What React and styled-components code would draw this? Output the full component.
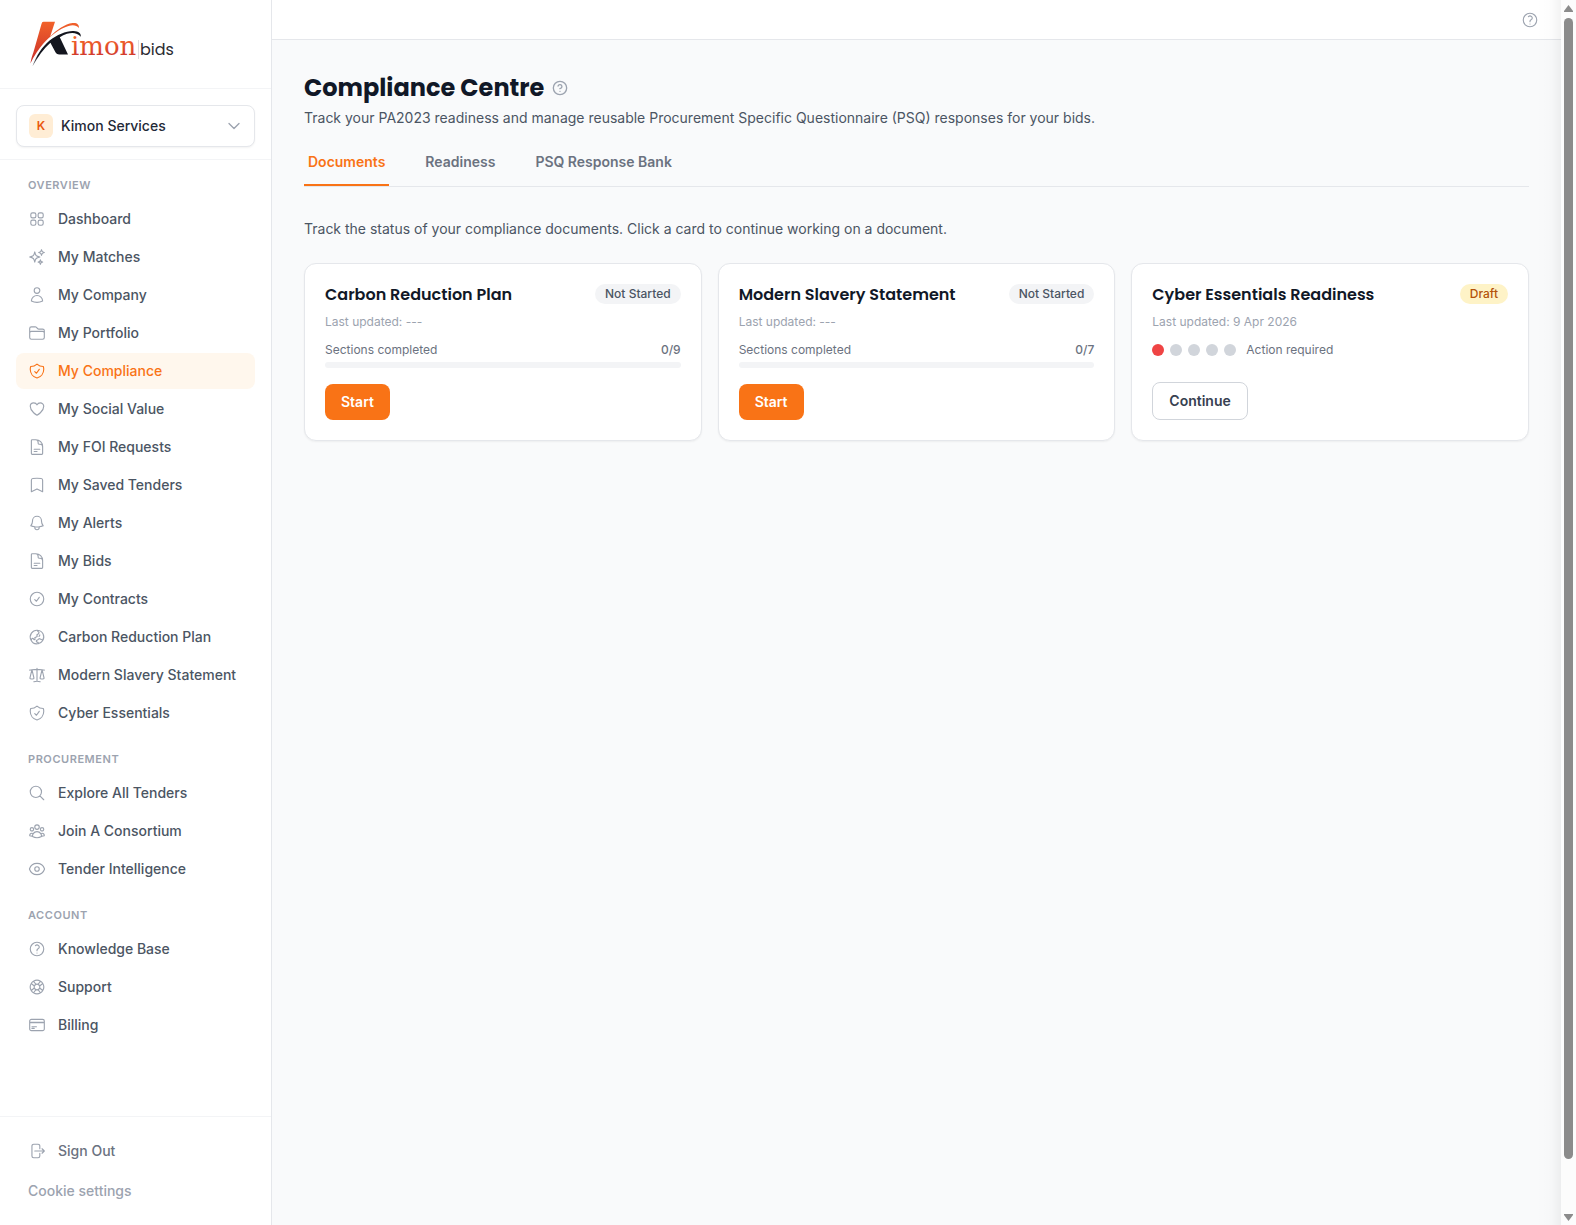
import React, { useState } from 'react';
import styled, { createGlobalStyle, css } from 'styled-components';
import { HelpCircle } from 'lucide-react';
import {
  HiOutlineSquares2X2,
  HiOutlineSparkles,
  HiOutlineUser,
  HiOutlineFolder,
  HiOutlineShieldCheck,
  HiOutlineHeart,
  HiOutlineDocumentText,
  HiOutlineBookmark,
  HiOutlineBell,
  HiOutlineCheckCircle,
  HiOutlineGlobeAsiaAustralia,
  HiOutlineScale,
  HiOutlineMagnifyingGlass,
  HiOutlineUserGroup,
  HiOutlineEye,
  HiOutlineQuestionMarkCircle,
  HiOutlineLifebuoy,
  HiOutlineCreditCard,
  HiOutlineArrowRightOnRectangle,
  HiOutlineChevronDown,
} from 'react-icons/hi2';

const GlobalStyle = createGlobalStyle`
  *, *::before, *::after {
    box-sizing: border-box;
  }

  body {
    margin: 0;
    background: #f9fafb;
    color: #4b5563;
    font-family: Inter, "Liberation Sans", sans-serif;
    font-size: 14px;
    line-height: 20px;
  }

  h1, h2, h3, p, ul {
    margin: 0;
    padding: 0;
  }

  ul {
    list-style: none;
  }

  button {
    font: inherit;
    cursor: pointer;
  }
`;

const Layout = styled.div`
  display: flex;
  min-height: 100vh;
`;

const Sidebar = styled.aside`
  display: flex;
  flex-direction: column;
  flex: 0 0 272px;
  background: #fff;
  border-right: 1px solid #e5e7eb;
`;

const Brand = styled.a`
  display: flex;
  align-items: center;
  padding: 16px 28px;
  border-bottom: 1px solid #f3f4f6;
`;

const LogoSvg = styled.svg`
  display: block;
  width: 148px;
  height: 56px;
`;

const Workspace = styled.div`
  padding: 16px 16px 12px;
  border-bottom: 1px solid #f3f4f6;
`;

const WorkspaceButton = styled.button`
  display: flex;
  align-items: center;
  gap: 8px;
  width: 100%;
  padding: 8px 12px;
  background: #fff;
  border: 1px solid #e5e7eb;
  border-radius: 8px;
  box-shadow: 0 1px 2px rgba(0, 0, 0, 0.05);
  color: #1f2937;
  font-weight: 500;
  text-align: left;

  svg {
    width: 16px;
    height: 16px;
    color: #9ca3af;
    stroke-width: 2;
  }
`;

const WorkspaceInitial = styled.span`
  width: 24px;
  height: 24px;
  border-radius: 6px;
  background: #ffedd5;
  color: #ea580c;
  font-size: 12px;
  font-weight: 600;
  line-height: 24px;
  text-align: center;
`;

const WorkspaceName = styled.span`
  flex: 1;
`;

const Nav = styled.nav`
  display: flex;
  flex-direction: column;
  flex: 1;
  gap: 20px;
  padding: 17px 16px 16px;
`;

const NavHeading = styled.h2`
  margin-bottom: 8px;
  padding: 0 12px;
  color: #9ca3af;
  font-size: 11px;
  font-weight: 600;
  line-height: 16px;
  letter-spacing: 0.05em;
  text-transform: uppercase;
`;

const NavList = styled.ul`
  display: flex;
  flex-direction: column;
  gap: 2px;
`;

const itemStyle = css`
  display: flex;
  align-items: center;
  gap: 12px;
  width: 100%;
  padding: 8px 12px;
  border: 0;
  border-radius: 8px;
  background: transparent;
  font-weight: 500;
  text-decoration: none;

  svg {
    flex: none;
    width: 18px;
    height: 18px;
  }
`;

const NavLink = styled.a`
  ${itemStyle}
  background: ${(props) => (props.$active ? '#fff7ed' : 'transparent')};
  color: ${(props) => (props.$active ? '#f97316' : '#4b5563')};

  svg {
    color: ${(props) => (props.$active ? '#f97316' : '#9ca3af')};
  }
`;

const SidebarFooter = styled.div`
  display: flex;
  flex-direction: column;
  gap: 4px;
  padding: 16px;
  border-top: 1px solid #f3f4f6;
`;

const FooterButton = styled.button`
  ${itemStyle}
  color: ${(props) => (props.$muted ? '#9ca3af' : '#6b7280')};

  svg {
    color: #9ca3af;
  }
`;

const Page = styled.div`
  position: relative;
  display: flex;
  flex-direction: column;
  flex: 1;
  min-width: 0;
`;

// soft shade along the scrolling edge
const EdgeShade = styled.div`
  position: absolute;
  top: 0;
  right: 0;
  bottom: 0;
  width: 24px;
  background: linear-gradient(to right, rgba(0, 0, 0, 0), rgba(0, 0, 0, 0.01) 60%, rgba(0, 0, 0, 0.05));
  pointer-events: none;
`;

const TopBar = styled.header`
  display: flex;
  align-items: center;
  justify-content: flex-end;
  height: 40px;
  padding: 0 22px;
  background: #fff;
  border-bottom: 1px solid #e5e7eb;
`;

const HelpButton = styled.button`
  display: flex;
  padding: 0;
  border: 0;
  background: none;
  color: #9ca3af;

  svg {
    width: ${(props) => (props.$small ? '16px' : '18px')};
    height: ${(props) => (props.$small ? '16px' : '18px')};
  }
`;

const Content = styled.main`
  padding: 32px;
`;

const TitleRow = styled.div`
  display: flex;
  align-items: center;
  gap: 8px;
`;

const Title = styled.h1`
  color: #111827;
  font-family: Poppins, Inter, sans-serif;
  font-size: 24px;
  font-weight: 700;
  line-height: 32px;
`;

const Subtitle = styled.p`
  margin-top: 4px;
`;

const Tabs = styled.div`
  display: flex;
  gap: 32px;
  margin: 12px 0 32px;
  border-bottom: 1px solid #e5e7eb;
`;

const Tab = styled.button`
  padding: 12px 4px;
  background: none;
  border: 0;
  border-bottom: 2px solid ${(props) => (props.$active ? '#f97316' : 'transparent')};
  color: ${(props) => (props.$active ? '#f97316' : '#6b7280')};
  font-weight: 600;
`;

const CardGrid = styled.div`
  display: grid;
  grid-template-columns: repeat(3, 1fr);
  gap: 16px;
  margin-top: 24px;
`;

const Card = styled.article`
  display: flex;
  flex-direction: column;
  padding: 20px;
  background: #fff;
  border: 1px solid #e5e7eb;
  border-radius: 12px;
  box-shadow: 0 1px 2px rgba(0, 0, 0, 0.05);
`;

const CardHeader = styled.div`
  display: flex;
  align-items: flex-start;
  justify-content: space-between;
  gap: 8px;
  margin-bottom: 8px;
`;

const CardTitle = styled.h3`
  color: #111827;
  font-family: Poppins, Inter, sans-serif;
  font-size: 16px;
  font-weight: 600;
  line-height: 22px;
`;

const Badge = styled.span`
  flex: none;
  padding: 2px 10px;
  border-radius: 10px;
  background: ${(props) => (props.$draft ? '#fef3c7' : '#f3f4f6')};
  color: ${(props) => (props.$draft ? '#b45309' : '#4b5563')};
  font-size: 12px;
  font-weight: 500;
  line-height: 16px;
`;

const Updated = styled.p`
  margin-bottom: 12px;
  color: #9ca3af;
  font-size: 12px;
  line-height: 16px;
`;

const ProgressRow = styled.div`
  display: flex;
  justify-content: space-between;
  margin-bottom: 4px;
  color: #6b7280;
  font-size: 12px;
  line-height: 16px;
`;

const ProgressCount = styled.span`
  font-weight: 500;
`;

const ProgressTrack = styled.div`
  height: 6px;
  border-radius: 3px;
  background: #f3f4f6;
  overflow: hidden;
`;

const ProgressFill = styled.div`
  height: 100%;
  background: #f97316;
`;

const StatusRow = styled.div`
  display: flex;
  align-items: center;
  gap: 6px;
  color: #6b7280;
  font-size: 12px;
  line-height: 16px;
`;

const Dot = styled.span`
  width: 12px;
  height: 12px;
  border-radius: 50%;
  background: ${(props) => (props.$on ? '#ef4444' : '#d1d5db')};
`;

const StatusText = styled.span`
  margin-left: 4px;
`;

const CardActions = styled.div`
  margin-top: auto;
  padding-top: 16px;
`;

const ActionButton = styled.button`
  display: block;
  padding: 8px 16px;
  border: ${(props) => (props.$primary ? '0' : '1px solid #d1d5db')};
  border-radius: 8px;
  background: ${(props) => (props.$primary ? '#f97316' : '#fff')};
  color: ${(props) => (props.$primary ? '#fff' : '#374151')};
  font-weight: 600;
`;

const ScrollTrack = styled.div`
  display: flex;
  flex-direction: column;
  align-items: center;
  flex: 0 0 15px;
  gap: 6px;
  padding: 5px 3px 4px;
  background: #fcfcfc;

  svg {
    display: block;
    width: 9px;
    height: 7px;
    fill: #8b8b8b;
  }
`;

const ScrollLane = styled.div`
  display: flex;
  flex: 1;
  width: 9px;
  padding-bottom: 49px;
`;

const ScrollThumb = styled.div`
  flex: 1;
  border-radius: 5px;
  background: #8b8b8b;
`;

const sections = [
  {
    heading: 'Overview',
    items: [
      { label: 'Dashboard', icon: HiOutlineSquares2X2 },
      { label: 'My Matches', icon: HiOutlineSparkles },
      { label: 'My Company', icon: HiOutlineUser },
      { label: 'My Portfolio', icon: HiOutlineFolder },
      { label: 'My Compliance', icon: HiOutlineShieldCheck, active: true },
      { label: 'My Social Value', icon: HiOutlineHeart },
      { label: 'My FOI Requests', icon: HiOutlineDocumentText },
      { label: 'My Saved Tenders', icon: HiOutlineBookmark },
      { label: 'My Alerts', icon: HiOutlineBell },
      { label: 'My Bids', icon: HiOutlineDocumentText },
      { label: 'My Contracts', icon: HiOutlineCheckCircle },
      { label: 'Carbon Reduction Plan', icon: HiOutlineGlobeAsiaAustralia },
      { label: 'Modern Slavery Statement', icon: HiOutlineScale },
      { label: 'Cyber Essentials', icon: HiOutlineShieldCheck },
    ],
  },
  {
    heading: 'Procurement',
    items: [
      { label: 'Explore All Tenders', icon: HiOutlineMagnifyingGlass },
      { label: 'Join A Consortium', icon: HiOutlineUserGroup },
      { label: 'Tender Intelligence', icon: HiOutlineEye },
    ],
  },
  {
    heading: 'Account',
    items: [
      { label: 'Knowledge Base', icon: HiOutlineQuestionMarkCircle },
      { label: 'Support', icon: HiOutlineLifebuoy },
      { label: 'Billing', icon: HiOutlineCreditCard },
    ],
  },
];

const tabs = ['Documents', 'Readiness', 'PSQ Response Bank'];

const documents = [
  { title: 'Carbon Reduction Plan', status: 'Not Started', updated: '---', done: 0, total: 9 },
  { title: 'Modern Slavery Statement', status: 'Not Started', updated: '---', done: 0, total: 7 },
  { title: 'Cyber Essentials Readiness', status: 'Draft', updated: '9 Apr 2026', rating: 1 },
];

const Logo = () => (
  <LogoSvg viewBox="28 16 148 56" role="img" aria-label="Kimon bids">
    <defs>
      <linearGradient id="flame" x1="0" y1="0" x2="0" y2="1">
        <stop offset="0" stopColor="#f2622a" />
        <stop offset="1" stopColor="#c92f2b" />
      </linearGradient>
      <linearGradient id="letters" x1="0" y1="0" x2="0" y2="1">
        <stop offset="0.3" stopColor="#f2622a" />
        <stop offset="0.85" stopColor="#d0392c" />
      </linearGradient>
      <linearGradient id="ink" x1="0" y1="0" x2="0" y2="1">
        <stop offset="0.7" stopColor="#14161f" />
        <stop offset="1" stopColor="#8a8c92" />
      </linearGradient>
    </defs>
    <path
      fill="url(#flame)"
      d="M43.5 21.7H55L50.2 36.4C57 29.8 65 24.2 72.5 23.1C77 22.6 79.5 24.8 78.8 28C76.8 25.2 73 24.6 68.5 25.9C59.5 28.7 50 35.9 43.4 43.6C38.4 49.2 34.2 56 30.4 63.4C31 59.2 32.2 55.8 33.5 52L41.4 24.2C41.9 22.5 42.3 21.7 43.5 21.7Z"
    />
    <path
      fill="url(#ink)"
      d="M32.4 66.6C36.4 55.6 42.2 46.8 49.6 40.6C57 34.6 66.4 30.7 73.6 31C78.6 31.3 81.4 33.4 80.7 36.8C77.6 32.8 72.4 32.2 67 33.8C64.400 34.600 62 35.800 59.800 37.200L68 54.400H59.400C57.200 54.400 56.200 53.600 55.200 51.800L50.400 42.800C43.800 48.600 38 56.600 32.400 66.600Z"
    />
    <text x="71" y="54.5" fill="url(#letters)" fontFamily="DejaVu Serif, serif" fontSize="26">
      imon
    </text>
    <path stroke="#dcdcdf" d="M138.500 40V59" />
    <text x="140" y="55" fill="#2a2b31" fontFamily="Poppins, Inter, sans-serif" fontWeight="400" fontSize="16">
      bids
    </text>
  </LogoSvg>
);

const DocumentCard = ({ doc }) => (
  <Card>
    <CardHeader>
      <CardTitle>{doc.title}</CardTitle>
      <Badge $draft={doc.status === 'Draft'}>{doc.status}</Badge>
    </CardHeader>
    <Updated>Last updated: {doc.updated}</Updated>
    {doc.rating ? (
      <StatusRow>
        {[1, 2, 3, 4, 5].map((n) => (
          <Dot key={n} $on={n <= doc.rating} />
        ))}
        <StatusText>Action required</StatusText>
      </StatusRow>
    ) : (
      <>
        <ProgressRow>
          <span>Sections completed</span>
          <ProgressCount>{doc.done}/{doc.total}</ProgressCount>
        </ProgressRow>
        <ProgressTrack>
          <ProgressFill style={{ width: `${(doc.done / doc.total) * 100}%` }} />
        </ProgressTrack>
      </>
    )}
    <CardActions>
      {doc.rating ? <ActionButton>Continue</ActionButton> : <ActionButton $primary>Start</ActionButton>}
    </CardActions>
  </Card>
);

const App = () => {
  const [tab, setTab] = useState(tabs[0]);

  return (
    <>
      <GlobalStyle />
      <Layout>
        <Sidebar>
          <Brand href="#home">
            <Logo />
          </Brand>
          <Workspace>
            <WorkspaceButton>
              <WorkspaceInitial>K</WorkspaceInitial>
              <WorkspaceName>Kimon Services</WorkspaceName>
              <HiOutlineChevronDown />
            </WorkspaceButton>
          </Workspace>
          <Nav>
            {sections.map((section) => (
              <div key={section.heading}>
                <NavHeading>{section.heading}</NavHeading>
                <NavList>
                  {section.items.map(({ label, icon: Icon, active }) => (
                    <li key={label}>
                      <NavLink href="#" $active={active}>
                        <Icon />
                        {label}
                      </NavLink>
                    </li>
                  ))}
                </NavList>
              </div>
            ))}
          </Nav>
          <SidebarFooter>
            <FooterButton>
              <HiOutlineArrowRightOnRectangle />
              Sign Out
            </FooterButton>
            <FooterButton $muted>Cookie settings</FooterButton>
          </SidebarFooter>
        </Sidebar>

        <Page>
          <TopBar>
            <HelpButton aria-label="Help">
              <HiOutlineQuestionMarkCircle />
            </HelpButton>
          </TopBar>
          <Content>
            <TitleRow>
              <Title>Compliance Centre</Title>
              <HelpButton $small aria-label="About this page">
                <HelpCircle />
              </HelpButton>
            </TitleRow>
            <Subtitle>
              Track your PA2023 readiness and manage reusable Procurement Specific Questionnaire (PSQ) responses for
              your bids.
            </Subtitle>
            <Tabs role="tablist">
              {tabs.map((name) => (
                <Tab
                  key={name}
                  role="tab"
                  aria-selected={tab === name}
                  $active={tab === name}
                  onClick={() => setTab(name)}
                >
                  {name}
                </Tab>
              ))}
            </Tabs>
            <p>Track the status of your compliance documents. Click a card to continue working on a document.</p>
            <CardGrid>
              {documents.map((doc) => (
                <DocumentCard key={doc.title} doc={doc} />
              ))}
            </CardGrid>
          </Content>
          <EdgeShade />
        </Page>

        <ScrollTrack aria-hidden="true">
          <svg viewBox="0 0 9 7">
            <path d="M4.500 0 9 6V7H0V6Z" />
          </svg>
          <ScrollLane>
            <ScrollThumb />
          </ScrollLane>
          <svg viewBox="0 0 9 7">
            <path d="M4.500 7 9 1V0H0V1Z" />
          </svg>
        </ScrollTrack>
      </Layout>
    </>
  );
};

export default App;
